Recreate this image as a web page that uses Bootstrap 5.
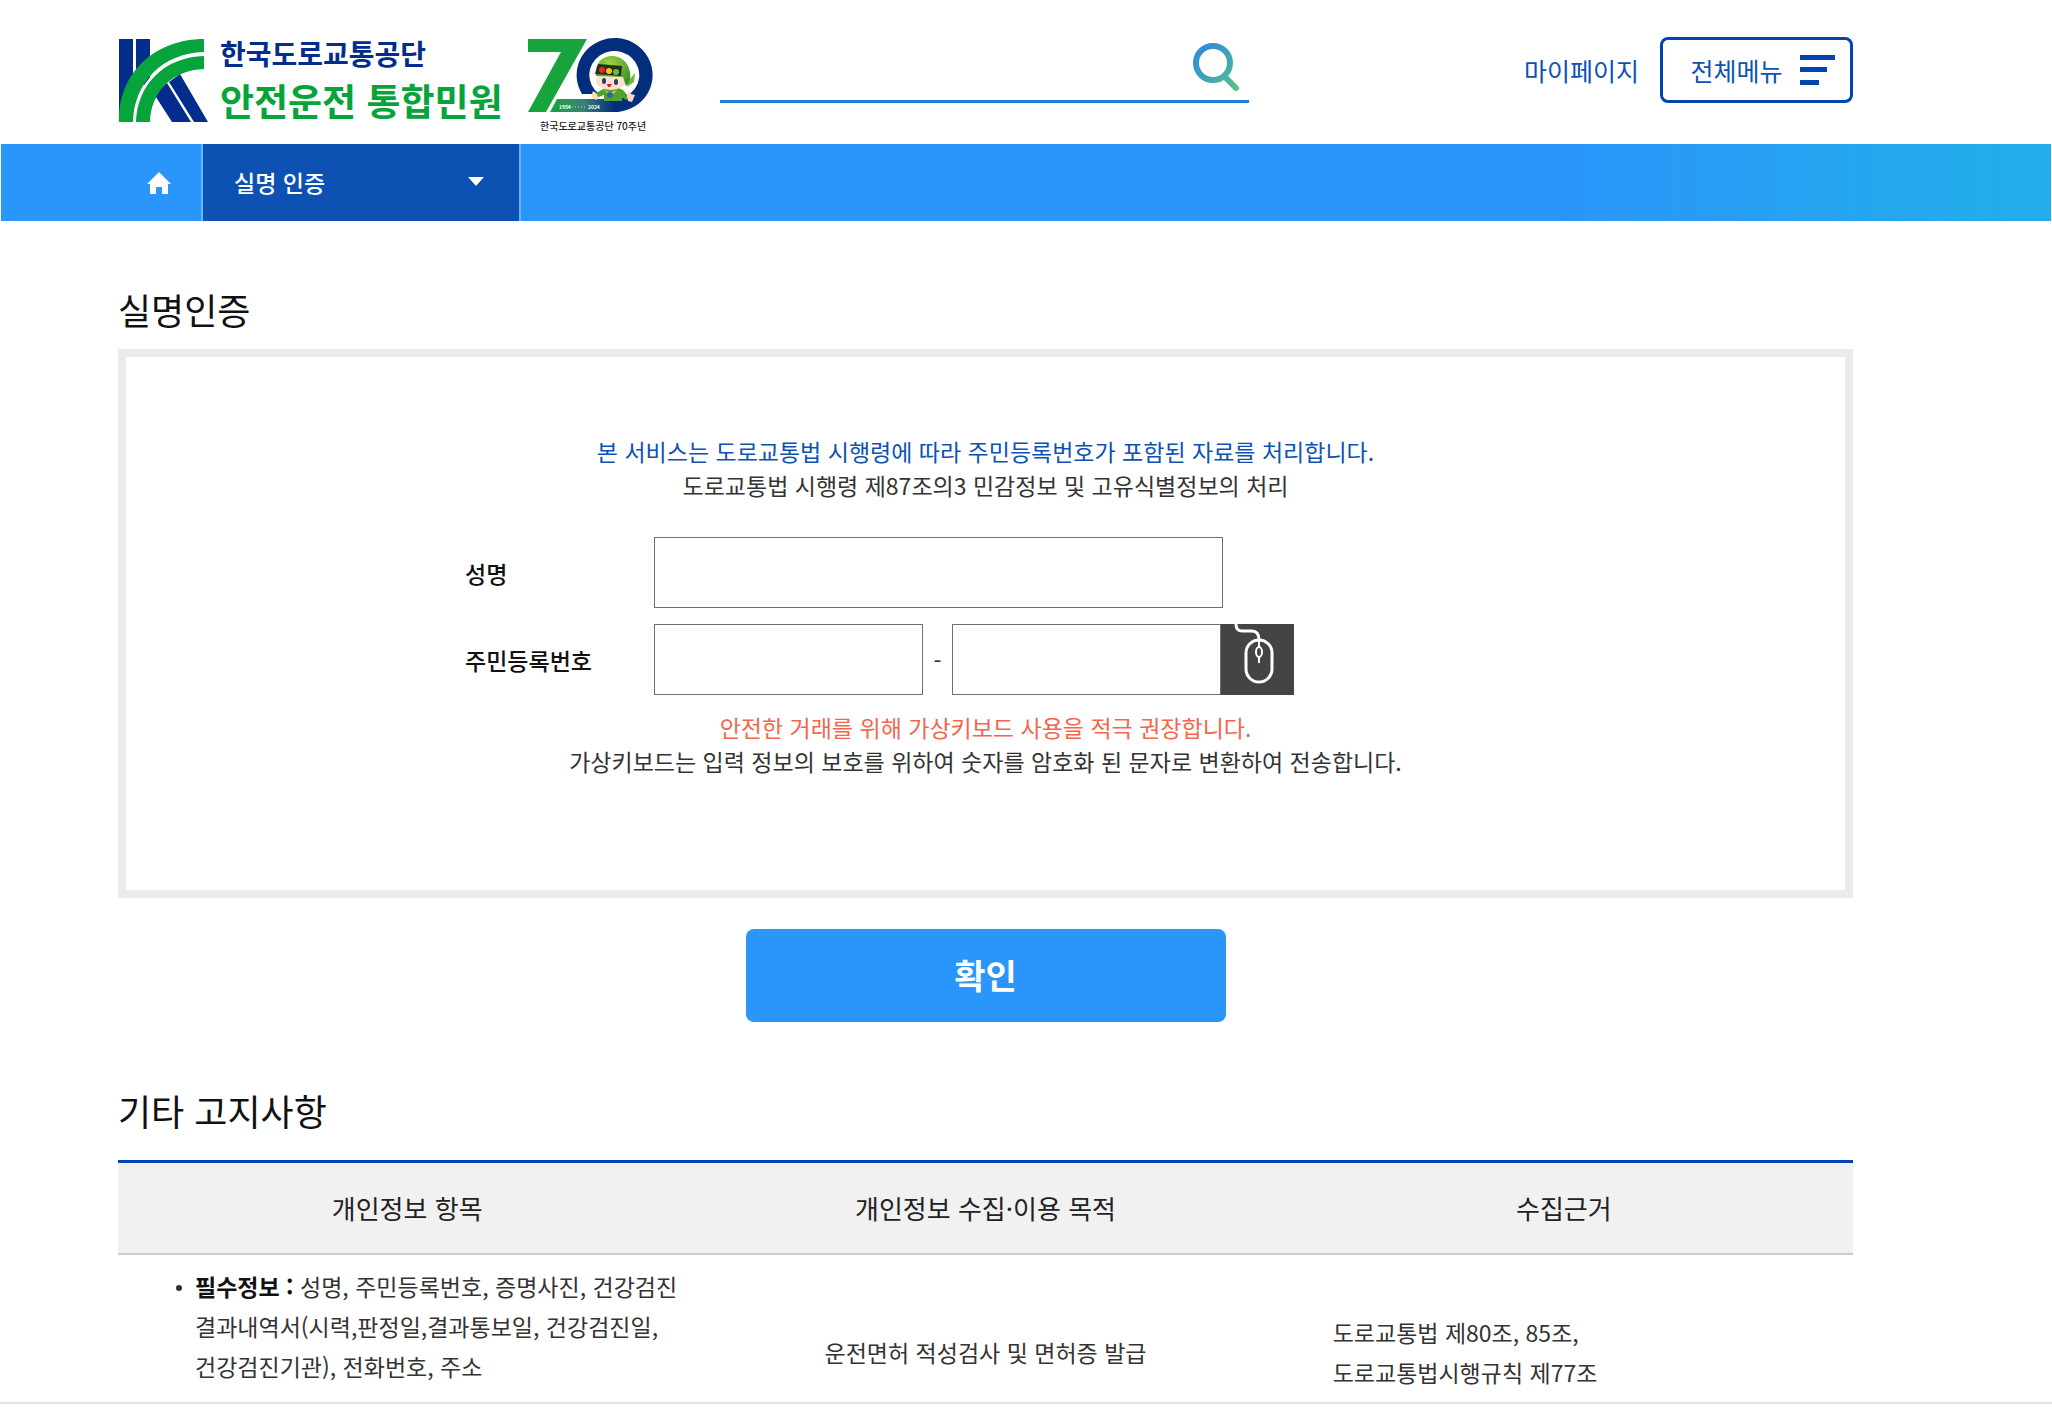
<!DOCTYPE html>
<html lang="ko">
<head>
<meta charset="utf-8">
<meta name="viewport" content="width=device-width, initial-scale=1">
<title>안전운전 통합민원 - 실명인증</title>
<link href="https://cdn.jsdelivr.net/npm/bootstrap@5.3.0/dist/css/bootstrap.min.css" rel="stylesheet">
<style>
  :root { --brand: #0d52b3; --deep: #0045b0; --sky: #2a95fa; }
  body { font-family: "Noto Sans CJK KR", "Noto Sans", sans-serif; font-size: 23px; line-height: 34px; color: #333; background: #fff; }
  .page-scroll { scrollbar-width: none; }
  .page-scroll::-webkit-scrollbar { display: none; }
  .wrap { padding-left: 118px; padding-right: 199px; }
  .site-head { height: 144px; }
  .brand-link { gap: 11px; padding-top: 38px; }
  .brand-org { font-size: 28px; line-height: 30px; color: #042c8c; }
  .brand-site { font-size: 37px; line-height: 52px; margin-top: 6px; color: #07a33b; }
  .anniv { margin-left: 23px; padding-top: 36px; }
  .search-box { margin-left: 66px; width: 529px; margin-top: 36px; height: 67px; border-bottom: 3px solid #1a7edb; }
  .search-box input { background: transparent; font-size: 23px; }
  .my-link { color: var(--brand); margin-right: 21px; }
  .menu-btn { width: 193px; height: 66px; border: 3px solid var(--deep); border-radius: 8px; background: #fff; color: var(--brand); gap: 17px; padding: 0 0 0 12px; }
  .head-tools { padding-top: 37px; height: 103px; font-size: 25px; }
  .path-bar { height: 77px; margin: 0 1px; background: linear-gradient(90deg, var(--sky) 76%, #23adea 98%); }
  .path-home { width: 200px; padding-right: 30px; }
  .path-menu { width: 320px; border: 0; border-left: 2px solid #6bb4fa; border-right: 2px solid #6bb4fa; background: var(--brand); color: #fff; padding: 0 35px 2px 31px; font-weight: 500; }
  .sec-title { font-size: 36px; line-height: 52px; font-weight: 400; color: #111; margin: 0; }
  .first-title { padding-top: 62px; margin-bottom: 14px; }
  .second-title { padding-top: 62px; margin-bottom: 24px; }
  .auth-panel { border: 8px solid #ebebeb; height: 549px; padding: 77px 0 0; }
  .text-brand { color: var(--brand); }
  .text-warn { color: #f4664c; }
  .auth-form { padding: 35px 0 15px 339px; }
  .auth-form label { width: 189px; color: #111; font-weight: 500; }
  .box-in { height: 71px; border: 1px solid #6f6f6f; border-radius: 0; background: #fff; font-size: 23px; }
  .w-name { width: 569px; }
  .w-num { width: 269px; }
  .row-gap { margin-top: 16px; }
  .dash { width: 29px; }
  .key-btn { width: 73px; height: 71px; background: #444; border: 0; padding: 0; }
  .ok-btn { width: 480px; height: 93px; margin-top: 31px; background: var(--sky); color: #fff; border: 0; border-radius: 8px; font-size: 34px; font-weight: 700; padding: 0 0 2px; }
  .notice { border-top: 3px solid var(--deep); table-layout: fixed; margin: 0; width: 100%; }
  .notice th { height: 92px; background: #f1f1f1; font-size: 26px; font-weight: 400; text-align: center; border-bottom: 2px solid #ccc; padding: 0; color: #222; }
  .notice td { height: 196px; padding: 0; line-height: 40px; vertical-align: middle; text-align: center; }
  .notice td.items { vertical-align: top; text-align: left; padding: 11px 0 0 58px; }
  .notice td.basis { text-align: left; padding-left: 58px; }
  .items ul { list-style: none; margin: 0; padding: 0; white-space: nowrap; }
  .items li { display: flex; gap: 13px; }
  .items li::before { content: ""; flex: none; width: 6px; height: 6px; border-radius: 50%; background: #333; margin-top: 19px; }
  .items b { color: #111; font-weight: 700; }
  .edge { height: 5px; background: #fff; border-top: 2px solid #e5e5e5; }
</style>
</head>
<body>
<div class="page-scroll vh-100 overflow-auto">
  <header class="site-head wrap d-flex align-items-start">
    <a href="#" class="brand-link d-flex text-decoration-none">
      <svg width="91" height="84" viewBox="0 0 91 84" aria-hidden="true">
        <path fill="#042c8c" d="M1 1h14v83H1zM18 1h14v46H18zM36 56l13-11 24 39H54zM51 44l11-8 28 48H76z"/>
        <path fill="none" stroke="#fff" stroke-width="3" d="M17 84C17 46 48 17 86 16"/>
        <path fill="#07a33b" d="M1 84C0 34 38 1 86 1v13C44 15 16 45 15 84zM18 84C19 46 47 19 86 18v13C54 32 33 54 32 84z"/>
      </svg>
      <span class="d-flex flex-column fw-bold text-nowrap">
        <span class="brand-org">한국도로교통공단</span>
        <span class="brand-site">안전운전 통합민원</span>
      </span>
    </a>
    <a href="#" class="anniv">
      <svg class="d-block" width="128" height="98" viewBox="527 36 128 98" role="img" aria-label="한국도로교통공단 70주년">
        <defs>
          <linearGradient id="ban" x1="552" x2="615" y1="0" y2="0" gradientUnits="userSpaceOnUse"><stop offset="0" stop-color="#17a43c"/><stop offset=".5" stop-color="#3b8377"/><stop offset="1" stop-color="#032e7c"/></linearGradient>
          <radialGradient id="cap" cx=".4" cy=".25" r=".8"><stop offset="0" stop-color="#9bd243"/><stop offset="1" stop-color="#3c8f23"/></radialGradient>
        </defs>
        <path fill="#17a43c" d="M529 39h59l-41 73h-18l33-60h-33z"/>
        <path fill="#032e7c" d="M583 94A38 37 0 1 1 616 112V99A25 24 0 1 0 600 94z"/>
        <path fill="url(#ban)" d="M558 99h62v13h-69z"/>
        <path fill="#4fa32c" d="M604 89q10-5 20 1l6 7-3 3-4-3v4h-18v-6l-8 3-3-3z"/>
        <path fill="#73b944" d="M630 80l6-7-1 9-7 5z"/>
        <ellipse cx="612" cy="81" rx="15" ry="9" fill="#fbe0cd"/>
        <path fill="url(#cap)" d="M597 76c-3-25 30-27 34-4 1 8-1 12-4 14l-3-9z"/>
        <path fill="#25301e" d="M599 64l24 2-1 10-26-2z"/>
        <circle cx="603" cy="70" r="3" fill="#e62b20"/><circle cx="610" cy="71" r="3" fill="#f7c51c"/><circle cx="617" cy="72" r="3" fill="#5dc33c"/>
        <ellipse cx="605" cy="81" rx="2" ry="3" fill="#233e67"/><ellipse cx="617" cy="82" rx="2" ry="3" fill="#233e67"/>
        <path fill="#c92a28" d="M608 84h5l-2 3h-2z"/>
        <path fill="#f1cf3e" d="M604 89l7 4 7-3-6 6z"/><circle cx="611" cy="95" r="3" fill="#2d64ae"/>
        <path fill="#fbd7bd" d="M594 91l3 2 3 5-3 2-5-3zM628 96l2-5 2 3 4 1-3 7-4-1z"/>
        <text x="560" y="109" fill="#fff" font-size="5" font-weight="700">1954</text>
        <path stroke="#b5d6d8" stroke-width="1" stroke-dasharray="1 2" d="M573 107h15"/>
        <text x="589" y="109" fill="#fff" font-size="5" font-weight="700">2024</text>
        <text x="541" y="130" fill="#222" font-size="10" font-weight="500">한국도로교통공단 70주년</text>
      </svg>
    </a>
    <form class="search-box d-flex align-items-start">
      <input type="search" class="form-control border-0 shadow-none h-100 rounded-0" aria-label="검색">
      <button type="button" class="btn border-0 p-0 pt-1 me-2" aria-label="검색">
        <svg class="d-block" width="50" height="54" viewBox="0 0 50 54" fill="none" stroke="url(#sg)" stroke-width="6" stroke-linecap="round">
          <defs><linearGradient id="sg" x1="5" y1="8" x2="45" y2="50" gradientUnits="userSpaceOnUse"><stop offset="0" stop-color="#2f8bdb"/><stop offset=".6" stop-color="#45a9ad"/><stop offset="1" stop-color="#55c483"/></linearGradient></defs>
          <circle cx="22" cy="23" r="17"/><path d="M34 37l11 11"/>
        </svg>
      </button>
    </form>
    <div class="head-tools d-flex align-items-center ms-auto text-nowrap">
      <a href="#" class="my-link text-decoration-none">마이페이지</a>
      <button type="button" class="menu-btn d-flex align-items-center justify-content-center">
        <span>전체메뉴</span>
        <svg width="35" height="30" viewBox="0 0 35 30" fill="#0045b0" aria-hidden="true"><path d="M0 0h35v5H0zM0 12h27v5H0zM0 25h19v5H0z"/></svg>
      </button>
    </div>
  </header>

  <nav class="path-bar d-flex" aria-label="현재 위치">
    <a href="#" class="path-home d-flex align-items-center justify-content-end" aria-label="홈">
      <svg width="24" height="22" viewBox="0 0 24 22" fill="#fff"><path d="M12 0l12 12h-3v10h-6v-7H9v7H3V12H0z"/></svg>
    </a>
    <button type="button" class="path-menu d-flex align-items-center justify-content-between">
      <span>실명 인증</span>
      <svg width="16" height="9" viewBox="0 0 16 9" fill="#fff" aria-hidden="true"><path d="M0 0h16L8 9z"/></svg>
    </button>
  </nav>

  <main class="wrap">
    <h2 class="sec-title first-title">실명인증</h2>
    <section class="auth-panel">
      <p class="text-center mb-0"><span class="text-brand">본 서비스는 도로교통법 시행령에 따라 주민등록번호가 포함된 자료를 처리합니다.</span><br>도로교통법 시행령 제87조의3 민감정보 및 고유식별정보의 처리</p>
      <form class="auth-form">
        <div class="d-flex align-items-center">
          <label for="name">성명</label>
          <input id="name" type="text" class="box-in w-name px-3">
        </div>
        <div class="d-flex align-items-center row-gap">
          <label for="rrn1">주민등록번호</label>
          <input id="rrn1" type="text" class="box-in w-num px-3">
          <span class="dash text-center">-</span>
          <input type="password" class="box-in w-num px-3" aria-label="주민등록번호 뒷자리">
          <button type="button" class="key-btn" aria-label="가상키보드">
            <svg class="d-block" width="73" height="71" viewBox="0 0 73 71" fill="none" stroke="#fff" stroke-width="3">
              <path d="M15 0c0 5 2 7 6 7h10c5 0 7 3 7 9"/><rect x="25" y="16" width="26" height="42" rx="13"/>
              <ellipse cx="38" cy="28" rx="3" ry="5" stroke-width="2"/><path stroke-width="2" d="M38 16v7M38 33v6"/>
            </svg>
          </button>
        </div>
      </form>
      <p class="text-center mb-0"><span class="text-warn">안전한 거래를 위해 가상키보드 사용을 적극 권장합니다.</span><br>가상키보드는 입력 정보의 보호를 위하여 숫자를 암호화 된 문자로 변환하여 전송합니다.</p>
    </section>
    <div class="d-flex justify-content-center"><button type="button" class="ok-btn">확인</button></div>

    <h2 class="sec-title second-title">기타 고지사항</h2>
    <table class="notice">
      <thead><tr><th scope="col">개인정보 항목</th><th scope="col">개인정보 수집·이용 목적</th><th scope="col">수집근거</th></tr></thead>
      <tbody><tr>
        <td class="items"><ul><li><span><b>필수정보 :</b> 성명, 주민등록번호, 증명사진, 건강검진<br>결과내역서(시력,판정일,결과통보일, 건강검진일,<br>건강검진기관), 전화번호, 주소</span></li></ul></td>
        <td>운전면허 적성검사 및 면허증 발급</td>
        <td class="basis">도로교통법 제80조, 85조,<br>도로교통법시행규칙 제77조</td>
      </tr></tbody>
    </table>
  </main>
</div>
<div class="edge fixed-bottom"></div>
<script src="https://cdn.jsdelivr.net/npm/bootstrap@5.3.0/dist/js/bootstrap.bundle.min.js"></script>
</body>
</html>
